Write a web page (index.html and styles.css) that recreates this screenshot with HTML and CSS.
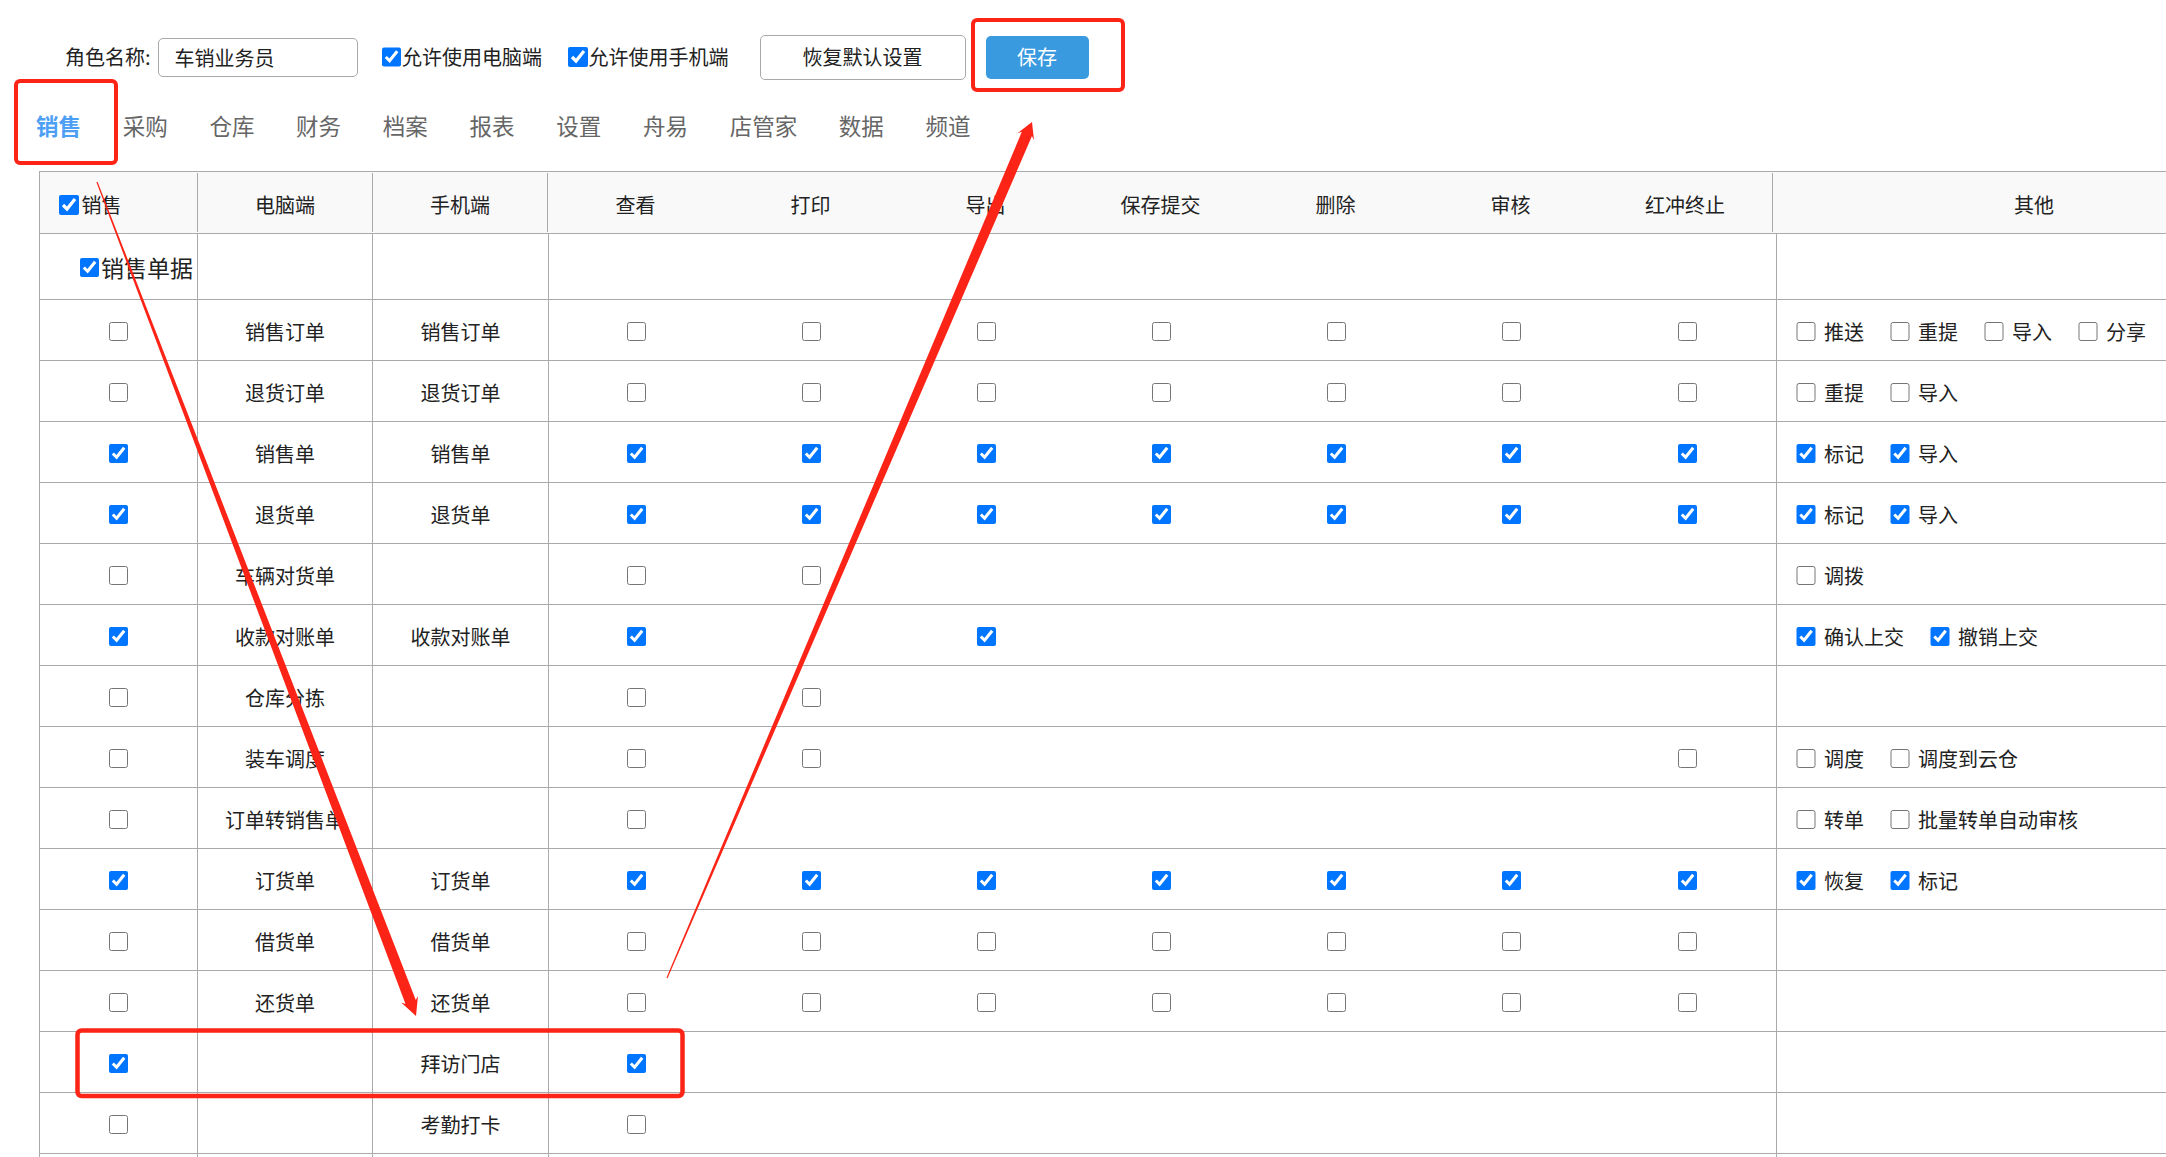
FILE: index.html
```html
<!DOCTYPE html>
<html lang="zh-CN">
<head>
<meta charset="utf-8">
<title>角色权限</title>
<link rel="stylesheet" href="styles.css">
</head>
<body>
<div class="page">
  <div class="topbar">
    <span class="role-label">角色名称:</span>
    <input class="role-input" type="text" value="车销业务员">
    <label class="chk chk-pc"><input type="checkbox" checked>允许使用电脑端</label>
    <label class="chk chk-mobile"><input type="checkbox" checked>允许使用手机端</label>
    <button class="btn btn-reset">恢复默认设置</button>
    <button class="btn btn-save">保存</button>
  </div>

  <nav class="tabs">
    <span class="tab active">销售</span>
    <span class="tab">采购</span>
    <span class="tab">仓库</span>
    <span class="tab">财务</span>
    <span class="tab">档案</span>
    <span class="tab">报表</span>
    <span class="tab">设置</span>
    <span class="tab">舟易</span>
    <span class="tab">店管家</span>
    <span class="tab">数据</span>
    <span class="tab">频道</span>
  </nav>

  <div class="grid">
    <div class="thead">
      <div class="th th-first bd"><input type="checkbox" checked><span>销售</span></div>
      <div class="th bd">电脑端</div>
      <div class="th bd">手机端</div>
      <div class="th">查看</div>
      <div class="th">打印</div>
      <div class="th">导出</div>
      <div class="th">保存提交</div>
      <div class="th">删除</div>
      <div class="th">审核</div>
      <div class="th bd">红冲终止</div>
      <div class="th">其他</div>
    </div>

    <div class="tbody">
      <div class="row group">
        <div class="td td-group bd"><input type="checkbox" checked><span>销售单据</span></div>
        <div class="td bd"></div>
        <div class="td bd"></div>
        <div class="td"></div><div class="td"></div><div class="td"></div><div class="td"></div><div class="td"></div><div class="td"></div>
        <div class="td bd"></div>
        <div class="td td-oth"></div>
      </div>

      <div class="row">
        <div class="td bd"><input type="checkbox"></div>
        <div class="td bd">销售订单</div>
        <div class="td bd">销售订单</div>
        <div class="td"><input type="checkbox"></div><div class="td"><input type="checkbox"></div><div class="td"><input type="checkbox"></div><div class="td"><input type="checkbox"></div><div class="td"><input type="checkbox"></div><div class="td"><input type="checkbox"></div>
        <div class="td bd"><input type="checkbox"></div>
        <div class="td td-oth">
          <label class="opt"><input type="checkbox">推送</label>
          <label class="opt"><input type="checkbox">重提</label>
          <label class="opt"><input type="checkbox">导入</label>
          <label class="opt"><input type="checkbox">分享</label>
        </div>
      </div>

      <div class="row">
        <div class="td bd"><input type="checkbox"></div>
        <div class="td bd">退货订单</div>
        <div class="td bd">退货订单</div>
        <div class="td"><input type="checkbox"></div><div class="td"><input type="checkbox"></div><div class="td"><input type="checkbox"></div><div class="td"><input type="checkbox"></div><div class="td"><input type="checkbox"></div><div class="td"><input type="checkbox"></div>
        <div class="td bd"><input type="checkbox"></div>
        <div class="td td-oth">
          <label class="opt"><input type="checkbox">重提</label>
          <label class="opt"><input type="checkbox">导入</label>
        </div>
      </div>

      <div class="row">
        <div class="td bd"><input type="checkbox" checked></div>
        <div class="td bd">销售单</div>
        <div class="td bd">销售单</div>
        <div class="td"><input type="checkbox" checked></div><div class="td"><input type="checkbox" checked></div><div class="td"><input type="checkbox" checked></div><div class="td"><input type="checkbox" checked></div><div class="td"><input type="checkbox" checked></div><div class="td"><input type="checkbox" checked></div>
        <div class="td bd"><input type="checkbox" checked></div>
        <div class="td td-oth">
          <label class="opt"><input type="checkbox" checked>标记</label>
          <label class="opt"><input type="checkbox" checked>导入</label>
        </div>
      </div>

      <div class="row">
        <div class="td bd"><input type="checkbox" checked></div>
        <div class="td bd">退货单</div>
        <div class="td bd">退货单</div>
        <div class="td"><input type="checkbox" checked></div><div class="td"><input type="checkbox" checked></div><div class="td"><input type="checkbox" checked></div><div class="td"><input type="checkbox" checked></div><div class="td"><input type="checkbox" checked></div><div class="td"><input type="checkbox" checked></div>
        <div class="td bd"><input type="checkbox" checked></div>
        <div class="td td-oth">
          <label class="opt"><input type="checkbox" checked>标记</label>
          <label class="opt"><input type="checkbox" checked>导入</label>
        </div>
      </div>

      <div class="row">
        <div class="td bd"><input type="checkbox"></div>
        <div class="td bd">车辆对货单</div>
        <div class="td bd"></div>
        <div class="td"><input type="checkbox"></div><div class="td"><input type="checkbox"></div><div class="td"></div><div class="td"></div><div class="td"></div><div class="td"></div>
        <div class="td bd"></div>
        <div class="td td-oth">
          <label class="opt"><input type="checkbox">调拨</label>
        </div>
      </div>

      <div class="row">
        <div class="td bd"><input type="checkbox" checked></div>
        <div class="td bd">收款对账单</div>
        <div class="td bd">收款对账单</div>
        <div class="td"><input type="checkbox" checked></div><div class="td"></div><div class="td"><input type="checkbox" checked></div><div class="td"></div><div class="td"></div><div class="td"></div>
        <div class="td bd"></div>
        <div class="td td-oth">
          <label class="opt"><input type="checkbox" checked>确认上交</label>
          <label class="opt"><input type="checkbox" checked>撤销上交</label>
        </div>
      </div>

      <div class="row">
        <div class="td bd"><input type="checkbox"></div>
        <div class="td bd">仓库分拣</div>
        <div class="td bd"></div>
        <div class="td"><input type="checkbox"></div><div class="td"><input type="checkbox"></div><div class="td"></div><div class="td"></div><div class="td"></div><div class="td"></div>
        <div class="td bd"></div>
        <div class="td td-oth"></div>
      </div>

      <div class="row">
        <div class="td bd"><input type="checkbox"></div>
        <div class="td bd">装车调度</div>
        <div class="td bd"></div>
        <div class="td"><input type="checkbox"></div><div class="td"><input type="checkbox"></div><div class="td"></div><div class="td"></div><div class="td"></div><div class="td"></div>
        <div class="td bd"><input type="checkbox"></div>
        <div class="td td-oth">
          <label class="opt"><input type="checkbox">调度</label>
          <label class="opt"><input type="checkbox">调度到云仓</label>
        </div>
      </div>

      <div class="row">
        <div class="td bd"><input type="checkbox"></div>
        <div class="td bd">订单转销售单</div>
        <div class="td bd"></div>
        <div class="td"><input type="checkbox"></div><div class="td"></div><div class="td"></div><div class="td"></div><div class="td"></div><div class="td"></div>
        <div class="td bd"></div>
        <div class="td td-oth">
          <label class="opt"><input type="checkbox">转单</label>
          <label class="opt"><input type="checkbox">批量转单自动审核</label>
        </div>
      </div>

      <div class="row">
        <div class="td bd"><input type="checkbox" checked></div>
        <div class="td bd">订货单</div>
        <div class="td bd">订货单</div>
        <div class="td"><input type="checkbox" checked></div><div class="td"><input type="checkbox" checked></div><div class="td"><input type="checkbox" checked></div><div class="td"><input type="checkbox" checked></div><div class="td"><input type="checkbox" checked></div><div class="td"><input type="checkbox" checked></div>
        <div class="td bd"><input type="checkbox" checked></div>
        <div class="td td-oth">
          <label class="opt"><input type="checkbox" checked>恢复</label>
          <label class="opt"><input type="checkbox" checked>标记</label>
        </div>
      </div>

      <div class="row">
        <div class="td bd"><input type="checkbox"></div>
        <div class="td bd">借货单</div>
        <div class="td bd">借货单</div>
        <div class="td"><input type="checkbox"></div><div class="td"><input type="checkbox"></div><div class="td"><input type="checkbox"></div><div class="td"><input type="checkbox"></div><div class="td"><input type="checkbox"></div><div class="td"><input type="checkbox"></div>
        <div class="td bd"><input type="checkbox"></div>
        <div class="td td-oth"></div>
      </div>

      <div class="row">
        <div class="td bd"><input type="checkbox"></div>
        <div class="td bd">还货单</div>
        <div class="td bd">还货单</div>
        <div class="td"><input type="checkbox"></div><div class="td"><input type="checkbox"></div><div class="td"><input type="checkbox"></div><div class="td"><input type="checkbox"></div><div class="td"><input type="checkbox"></div><div class="td"><input type="checkbox"></div>
        <div class="td bd"><input type="checkbox"></div>
        <div class="td td-oth"></div>
      </div>

      <div class="row">
        <div class="td bd"><input type="checkbox" checked></div>
        <div class="td bd"></div>
        <div class="td bd">拜访门店</div>
        <div class="td"><input type="checkbox" checked></div><div class="td"></div><div class="td"></div><div class="td"></div><div class="td"></div><div class="td"></div>
        <div class="td bd"></div>
        <div class="td td-oth"></div>
      </div>

      <div class="row">
        <div class="td bd"><input type="checkbox"></div>
        <div class="td bd"></div>
        <div class="td bd">考勤打卡</div>
        <div class="td"><input type="checkbox"></div><div class="td"></div><div class="td"></div><div class="td"></div><div class="td"></div><div class="td"></div>
        <div class="td bd"></div>
        <div class="td td-oth"></div>
      </div>

      <div class="row">
        <div class="td bd"></div>
        <div class="td bd"></div>
        <div class="td bd"></div>
        <div class="td"></div><div class="td"></div><div class="td"></div><div class="td"></div><div class="td"></div><div class="td"></div>
        <div class="td bd"></div>
        <div class="td td-oth"></div>
      </div>
    </div>
  </div>

  <svg class="annot" width="2166" height="1157" viewBox="0 0 2166 1157" aria-hidden="true">
    <rect x="16" y="81" width="100" height="82" rx="4" fill="none" stroke="#fb2416" stroke-width="4"/>
    <rect x="973" y="20" width="150" height="70" rx="4" fill="none" stroke="#fb2416" stroke-width="4"/>
    <rect x="77.5" y="1030.5" width="605" height="65.5" rx="4" fill="none" stroke="#fb2416" stroke-width="4.5"/>
    <polygon fill="#fb2416" points="97.56,181.79 415.78,1000.03 417.98,995.98 416,1016 401.16,1002.40 405.50,1003.95 96.44,182.21"/>
    <polygon fill="#fb2416" points="667.55,978.24 1031.96,136.12 1034.0,140.25 1032,122 1017.44,133.19 1021.84,131.80 666.45,977.76"/>
  </svg>
</div>
</body>
</html>
```

FILE: styles.css
```css
html, body {
  margin: 0;
  padding: 0;
  overflow: hidden;
  background: #ffffff;
}

body {
  font-family: "Noto Sans CJK SC", "Microsoft YaHei", "Liberation Sans", sans-serif;
  color: #222222;
  width: 2166px;
  height: 1157px;
}

.page {
  position: relative;
  width: 2166px;
  height: 1157px;
  overflow: hidden;
}

/* ---------- top bar ---------- */
.topbar {
  display: flex;
  align-items: center;
  height: 46px;
  padding: 34px 0 0 65px;
  font-size: 20px;
  line-height: 1.2;
}

.role-label {
  margin-right: 7px;
  white-space: nowrap;
}

.role-input {
  box-sizing: border-box;
  width: 200px;
  height: 39px;
  border: 1px solid #a9a9a9;
  border-radius: 5px;
  padding: 0 0 0 16px;
  font: inherit;
  color: #222222;
  background: #ffffff;
  outline: none;
}

.chk {
  display: flex;
  align-items: center;
  gap: 1px;
  white-space: nowrap;
}

.chk-pc { margin-left: 24px; }
.chk-mobile { margin-left: 26px; }

input[type="checkbox"] {
  box-sizing: border-box;
  width: 19.5px;
  height: 19.5px;
  margin: 0;
  flex: none;
}

.btn {
  box-sizing: border-box;
  font: inherit;
  font-size: 20px;
  border-radius: 5px;
  padding: 0;
  cursor: pointer;
}

.btn-reset {
  margin-left: 31px;
  width: 206px;
  height: 45px;
  background: #ffffff;
  border: 1px solid #a9a9a9;
  color: #222222;
}

.btn-save {
  margin-left: 20px;
  width: 103px;
  height: 43px;
  background: #3a9ae0;
  border: none;
  color: #ffffff;
}

/* ---------- tabs ---------- */
.tabs {
  display: flex;
  align-items: center;
  height: 91px;
  padding-left: 36px;
  gap: 41.7px;
  font-size: 22.5px;
  line-height: 1.2;
  color: #666666;
}

.tab { white-space: nowrap; }

.tab.active {
  color: #4d9ff5;
  font-weight: bold;
}

/* ---------- grid table ---------- */
.grid {
  margin-left: 39px;
  width: 2258px;
}

.thead {
  display: grid;
  grid-template-columns: 158px 175px 175px repeat(7, 175px) 522px;
  border: 1px solid #aaaaaa;
  border-right: none;
  padding: 1px 0;
  background: #f9f9f9;
  font-size: 20px;
}

.th {
  box-sizing: border-box;
  height: 59px;
  display: flex;
  align-items: center;
  justify-content: center;
  padding-top: 5px;
  line-height: 1.2;
  white-space: nowrap;
}

.th-first {
  justify-content: flex-start;
  padding-left: 19px;
  gap: 3px;
}

.bd { border-right: 1px solid #aaaaaa; }

.tbody {
  border-left: 1px solid #aaaaaa;
}

.row {
  display: grid;
  grid-template-columns: 158px 175px 176px repeat(6, 175px) 178px 520px;
  box-sizing: border-box;
  height: 61px;
  border-bottom: 1px solid #aaaaaa;
  font-size: 20px;
}

.row.group { height: 66px; }

.td {
  box-sizing: border-box;
  display: flex;
  align-items: center;
  justify-content: center;
  padding-top: 3px;
  line-height: 1.2;
  white-space: nowrap;
}

.row.group .td { padding-top: 2px; }

.td-group {
  justify-content: flex-start;
  padding-left: 39.5px;
  gap: 2px;
  font-size: 23px;
}

.td-oth {
  justify-content: flex-start;
  padding-left: 19px;
  gap: 26px;
}

.opt {
  display: flex;
  align-items: center;
  gap: 8.5px;
}

/* ---------- annotation overlay ---------- */
.annot {
  position: absolute;
  left: 0;
  top: 0;
  pointer-events: none;
}
```
